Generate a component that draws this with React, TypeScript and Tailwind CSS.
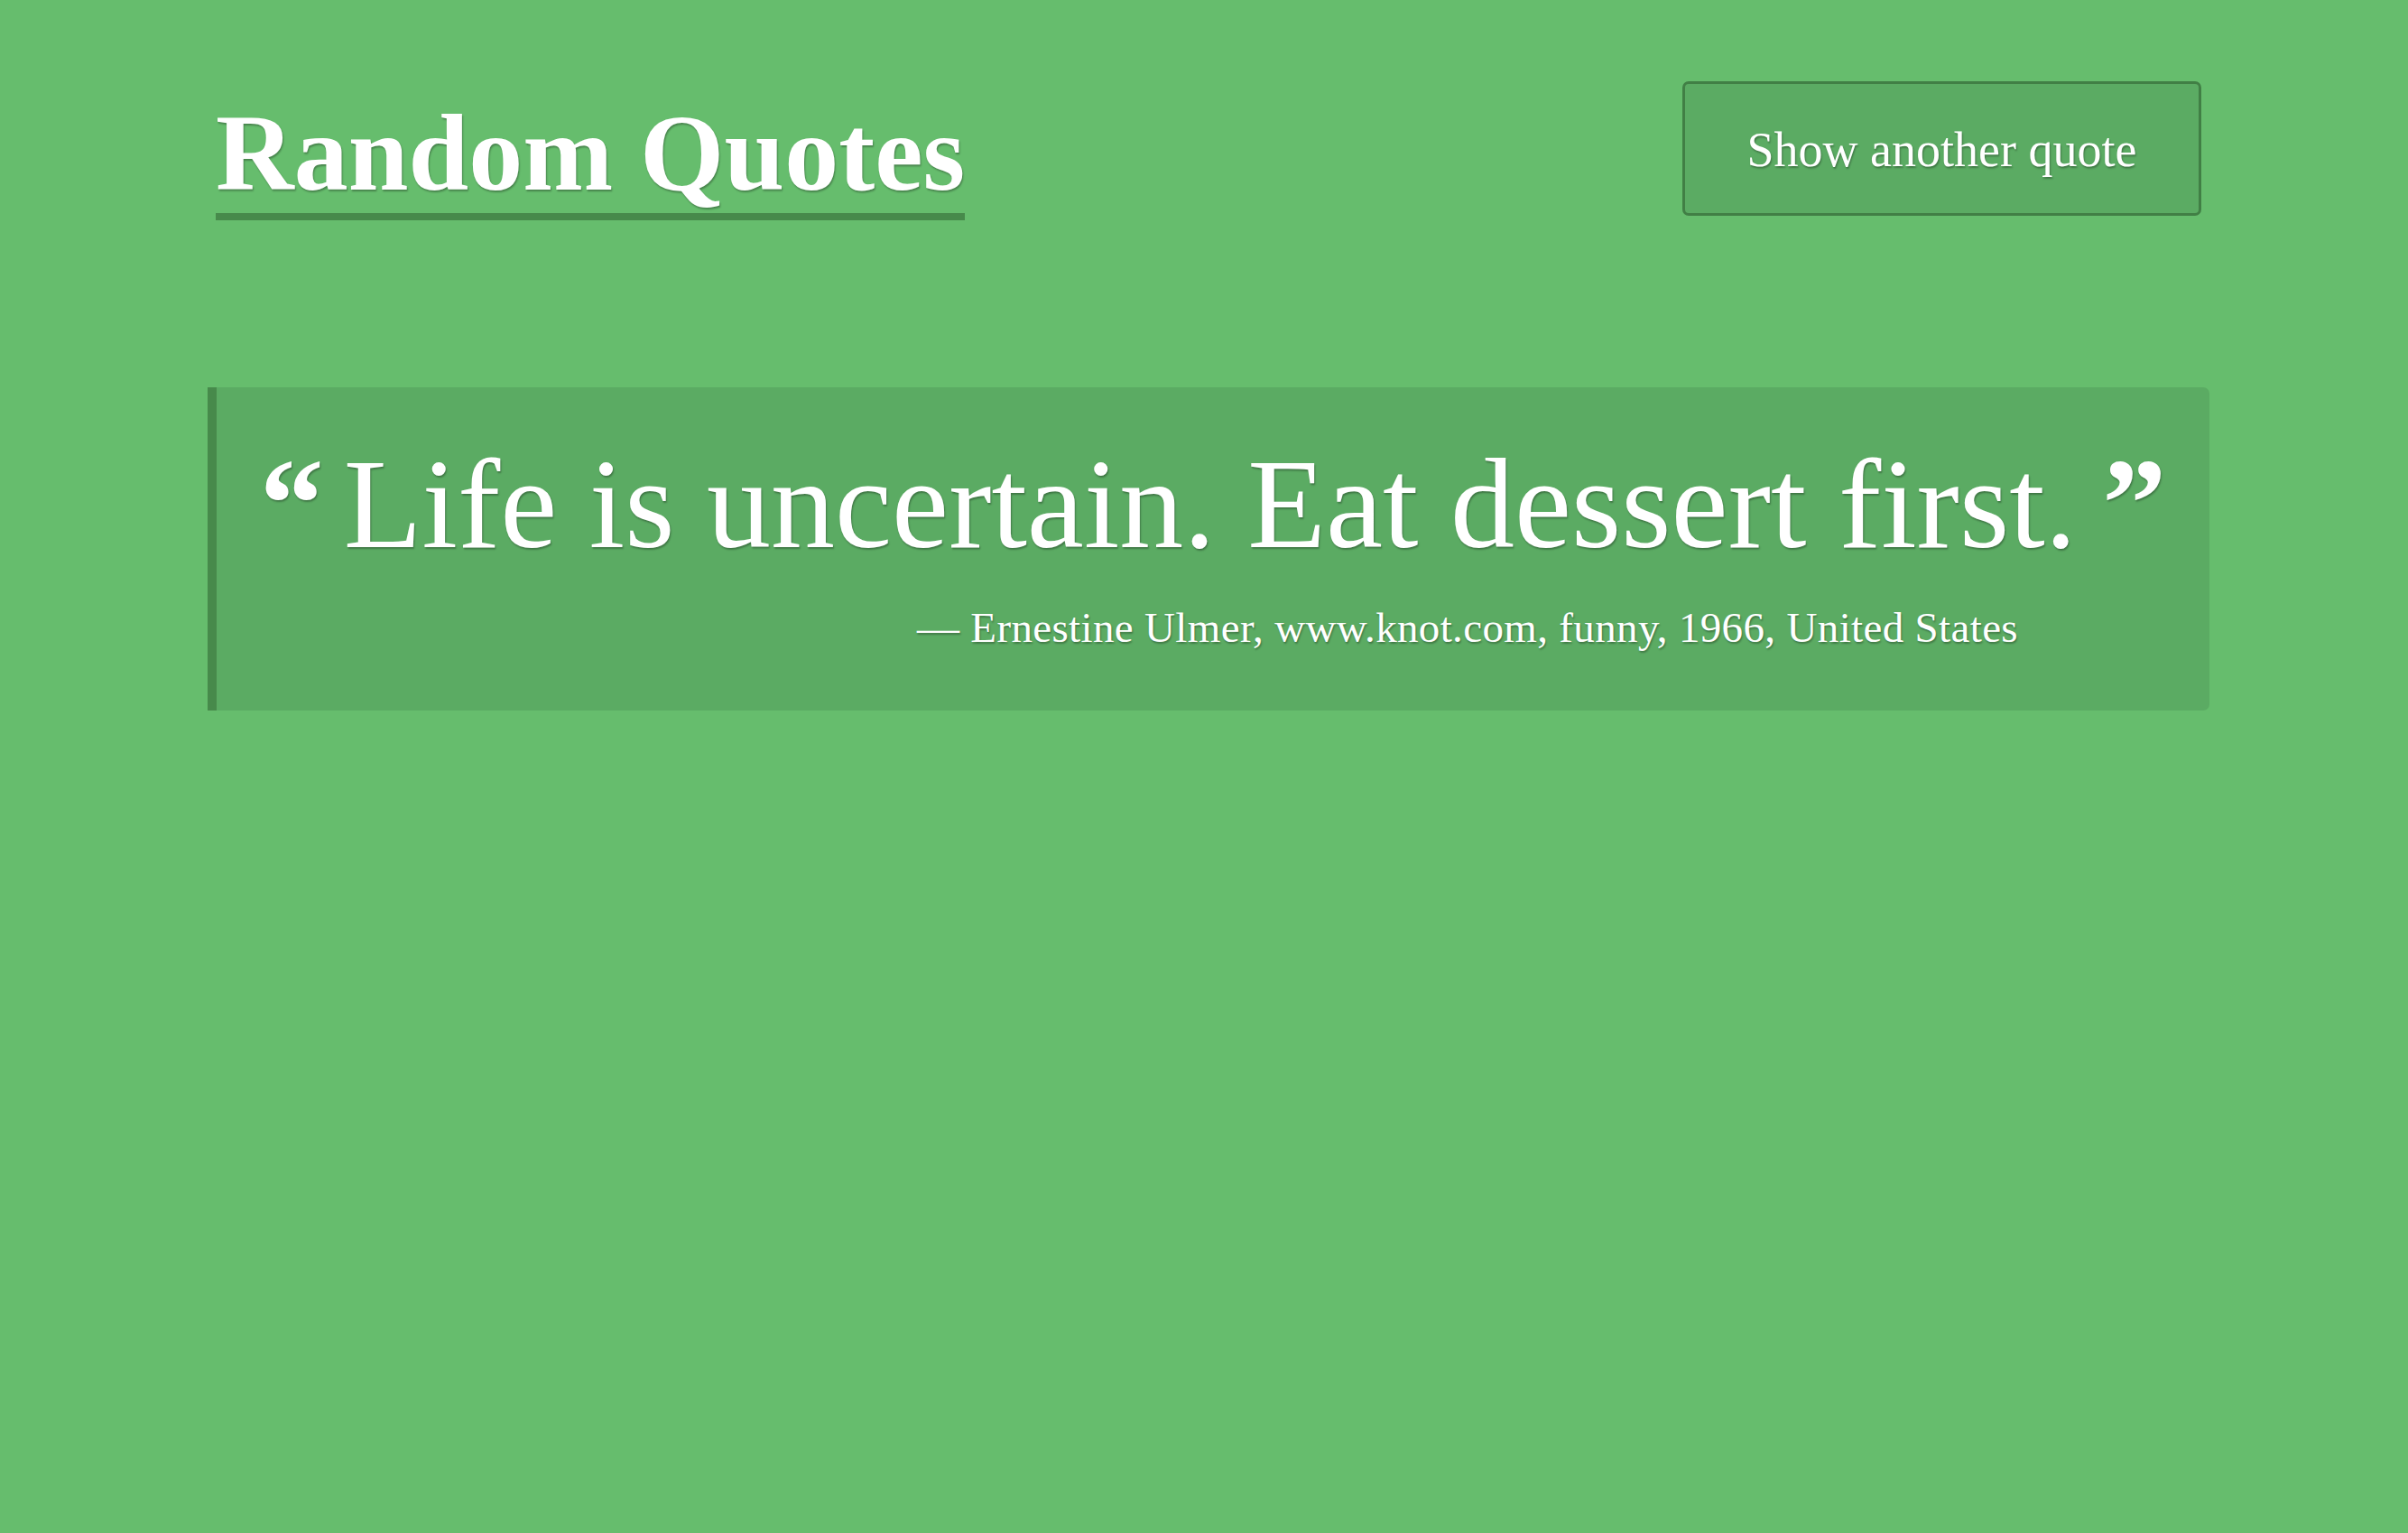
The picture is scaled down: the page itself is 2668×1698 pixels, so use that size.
const shadow = '[text-shadow:1px_2px_2px_rgba(0,0,0,0.3)]'

export default function App() {
  return (
    <div className="min-h-screen bg-[#66bd6d] font-['Liberation_Serif',serif] text-white">
      <div className="ml-[230px] w-[2218px] pt-[90px]">
        {/* Header */}
        <header className="flex items-start justify-between px-[9px]">
          <h1
            className={`mt-[20px] border-b-[8px] border-[#478a4b] pb-[6px] text-[120px] font-bold leading-none ${shadow}`}
          >
            Random Quotes
          </h1>
          <button
            type="button"
            className={`flex h-[149px] w-[575px] items-center justify-center rounded-[7px] border-[3px] border-[#417f45] bg-[#5bab63] pt-[3px] text-[54px] text-white ${shadow}`}
          >
            Show another quote
          </button>
        </header>

        {/* Quote card */}
        <blockquote className="mt-[185px] rounded-r-[7px] border-l-[10px] border-[#478a4b] bg-[#5bab63] pb-[68px] pt-[58px]">
          <p className={`flex items-baseline justify-center text-[142px] leading-none ${shadow}`}>
            <span className="mr-[22px] font-bold">“</span>
            <span>Life is uncertain. Eat dessert first.</span>
            <span className="ml-[28px] font-bold">”</span>
          </p>
          <p className={`mt-[43px] pr-[212px] text-right text-[47px] leading-none tracking-[0.35px] ${shadow}`}>
            — Ernestine Ulmer, www.knot.com, funny, 1966, United States
          </p>
        </blockquote>
      </div>
    </div>
  )
}
